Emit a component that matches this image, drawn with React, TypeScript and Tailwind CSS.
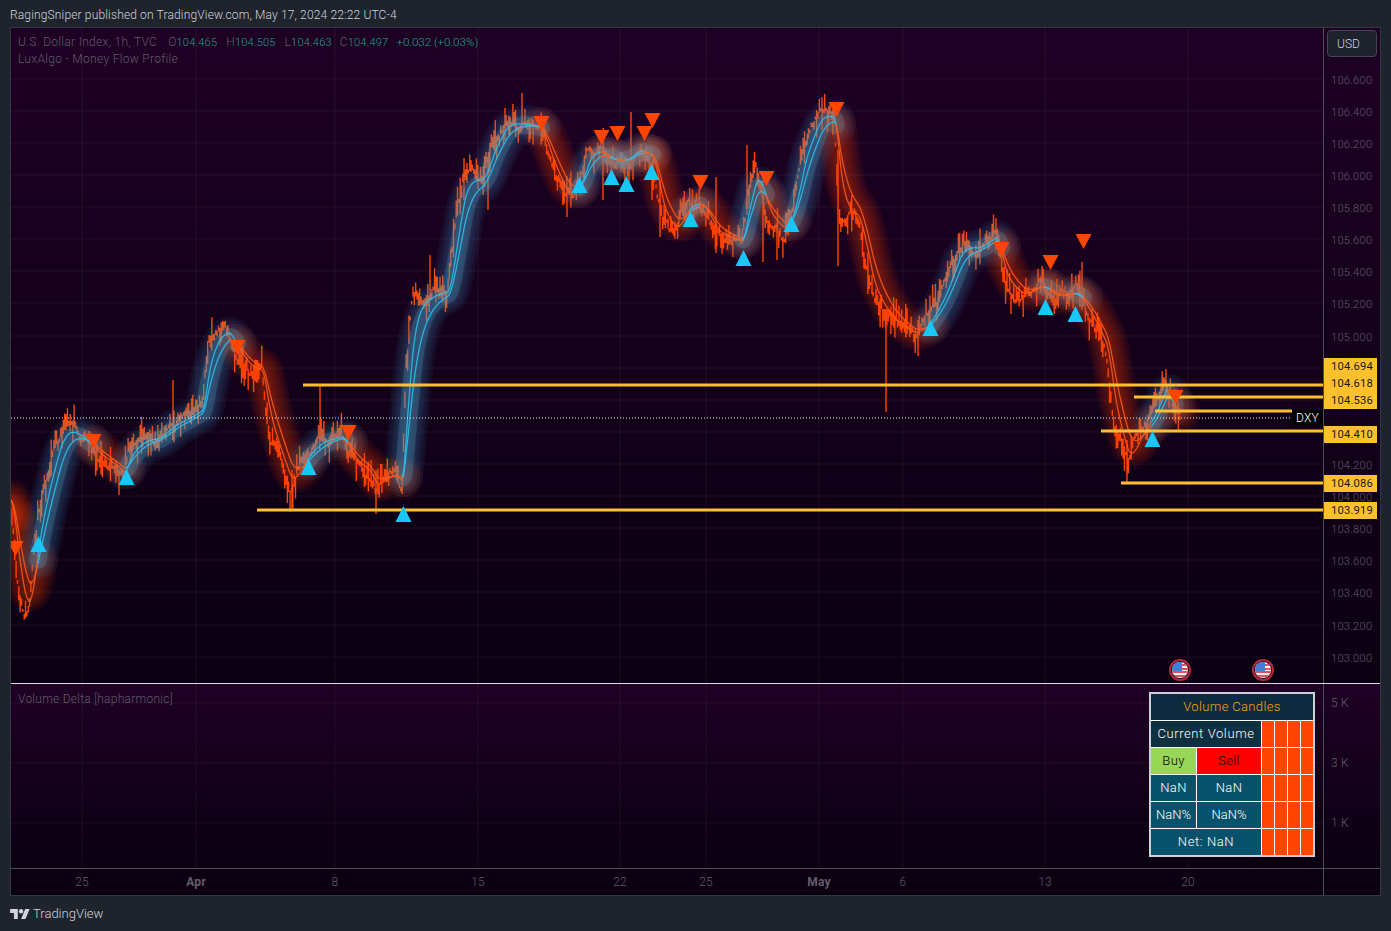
import React from "react";

const PRICE_TICKS = [
  ["106.600", 79], ["106.400", 111], ["106.200", 143], ["106.000", 175], ["105.800", 207],
  ["105.600", 239], ["105.400", 271], ["105.200", 303], ["105.000", 336], ["104.200", 464],
  ["104.000", 496], ["103.800", 528], ["103.600", 560], ["103.400", 592], ["103.200", 625], ["103.000", 657],
] as const;
const GRID_Y = [79, 111, 143, 175, 207, 239, 271, 303, 336, 368, 400, 432, 464, 496, 528, 560, 592, 625, 657];
const TIME_TICKS = [
  ["25", 82], ["Apr", 196], ["8", 335], ["15", 478], ["22", 620], ["25", 706], ["May", 819], ["6", 903], ["13", 1045], ["20", 1188],
] as const;
const PRICE_TAGS = [
  ["104.694", 358], ["104.618", 375], ["104.536", 392], ["104.410", 426], ["104.086", 475], ["103.919", 502],
] as const;
const LEVELS = [
  [303, 385], [1134, 397], [1101, 431], [1121, 483], [257, 510],
];

// hand-read price path, [x, y] in page pixels
const PATH: [number, number][] = [
  [11, 500], [14, 540], [18, 590], [24, 618], [29, 610], [33, 565], [38, 515], [44, 490], [52, 460], [60, 432], [68, 428],
  [80, 437], [92, 450], [104, 460], [118, 470], [124, 476], [130, 448], [142, 440], [158, 438], [172, 424], [186, 418], [202, 408],
  [208, 345], [218, 332], [228, 330], [236, 352], [248, 368], [262, 372], [268, 430], [278, 455], [290, 488], [298, 470], [308, 450],
  [322, 440], [342, 436], [352, 462], [368, 472], [376, 492], [384, 476], [396, 474], [402, 488], [406, 360], [412, 300], [428, 296],
  [448, 290], [456, 220], [464, 175], [482, 180], [494, 140], [506, 122], [522, 124], [540, 128], [552, 170], [566, 198], [578, 188],
  [588, 150], [600, 150], [612, 162], [626, 160], [638, 148], [652, 158], [662, 222], [676, 232], [688, 202], [702, 204], [716, 236],
  [730, 238], [742, 244], [748, 190], [756, 165], [768, 220], [784, 232], [792, 210], [804, 145], [820, 112], [834, 118], [840, 215],
  [858, 218], [872, 296], [892, 322], [914, 335], [928, 322], [944, 290], [960, 245], [978, 248], [996, 234], [1004, 285], [1022, 296],
  [1040, 284], [1056, 298], [1076, 292], [1092, 322], [1106, 352], [1114, 425], [1128, 466], [1140, 430], [1154, 410], [1166, 378], [1174, 420], [1180, 420],
];

// one-off wicks that stick out of the band
const SPIKES: [number, number, number][] = [
  [320, 385, 440], [886, 322, 412], [522, 93, 130], [173, 380, 425], [1082, 262, 310], [838, 150, 266], [292, 470, 510], [376, 470, 514],
  [1127, 440, 482], [1166, 369, 400], [119, 470, 495], [631, 112, 170], [430, 255, 300], [660, 180, 237], [716, 177, 253], [747, 145, 215],
  [763, 180, 262], [777, 225, 260], [603, 150, 200], [567, 195, 217], [822, 97, 130], [996, 218, 250], [918, 320, 356], [464, 158, 200],
  [652, 178, 200], [505, 108, 140], [488, 158, 210],
];

const SELLS: [number, number][] = [
  [15, 549], [93, 442], [237, 348], [348, 433], [541, 124], [601, 138], [617, 134], [644, 134], [652, 121], [700, 183], [766, 179],
  [836, 110], [1001, 250], [1050, 263], [1083, 242], [1175, 398],
];
const BUYS: [number, number][] = [
  [38, 544], [126, 477], [308, 467], [403, 514], [579, 185], [611, 177], [626, 184], [651, 172], [690, 219], [743, 258], [791, 224],
  [930, 328], [1045, 307], [1075, 314], [1152, 439],
];

function baseAt(x: number) {
  for (let i = 0; i < PATH.length - 1; i++) {
    const [x0, y0] = PATH[i];
    const [x1, y1] = PATH[i + 1];
    if (x >= x0 && x <= x1) return y0 + ((y1 - y0) * (x - x0)) / (x1 - x0);
  }
  return PATH[PATH.length - 1][1];
}

function buildChart() {
  let seed = 42;
  const rnd = () => {
    seed = (seed + 0x6d2b79f5) | 0;
    let t = Math.imul(seed ^ (seed >>> 15), 1 | seed);
    t = (t + Math.imul(t ^ (t >>> 7), 61 | t)) ^ t;
    return ((t ^ (t >>> 14)) >>> 0) / 4294967296;
  };
  let bars = "";
  let drift = 0;
  for (let x = 12; x <= 1180; x += 1.35) {
    drift = drift * 0.86 + (rnd() - 0.5) * 5.5;
    const c = baseAt(x) + drift + 3 * Math.sin(x * 0.33);
    const top = c - 1.5 - rnd() ** 3 * 20;
    const bot = c + 1.5 + rnd() ** 3 * 20;
    bars += `M${x.toFixed(1)} ${top.toFixed(1)}V${bot.toFixed(1)}`;
  }
  for (const [x, a, b] of SPIKES) bars += `M${x} ${a}V${b}`;

  // the two moving averages, one point per pixel
  const fast: [number, number][] = [];
  const slow: [number, number][] = [];
  let f = baseAt(11);
  let s = baseAt(11);
  for (let x = 11; x <= 1180; x++) {
    const b = baseAt(x);
    f += (b - f) * 0.16;
    s += (b - s) * 0.09;
    fast.push([x, f]);
    slow.push([x, s]);
  }

  const turns = [
    ...SELLS.map(([x]) => ({ x, kind: "sell" })),
    ...BUYS.map(([x]) => ({ x, kind: "buy" })),
  ].sort((a, b) => a.x - b.x);
  turns.unshift({ x: 11, kind: "sell" });
  const toD = (pts: [number, number][]) => "M" + pts.map(([x, y]) => `${x} ${y.toFixed(1)}`).join("L");
  const segments = turns.map((t, i) => {
    const end = i < turns.length - 1 ? turns[i + 1].x : 1180;
    const inRange = (p: [number, number]) => p[0] >= t.x && p[0] <= end;
    const mid = fast.map((p, j) => [p[0], (p[1] + slow[j][1]) / 2] as [number, number]).filter(inRange);
    return {
      kind: t.kind,
      key: t.x + t.kind,
      mid: toD(mid.length > 1 ? mid : [[t.x, baseAt(t.x)], [t.x + 1, baseAt(t.x)]]),
      fast: toD(fast.filter(inRange)),
      slow: toD(slow.filter(inRange)),
    };
  });
  return { bars, segments };
}

const CHART = buildChart();
const GLOW_WIDTHS = [40, 34, 28, 22, 16, 10];

function Flag({ x, y }: { x: number; y: number }) {
  return (
    <g transform={`translate(${x} ${y})`}>
      <circle r="10" fill="#1c1020" stroke="#b5283c" strokeWidth="2" />
      <g clipPath="url(#flag-clip)">
        <rect x="-8" y="-8" width="16" height="16" fill="#f4f4f4" />
        <rect x="-8" y="1" width="16" height="2" fill="#e4505a" />
        <rect x="-8" y="5" width="16" height="2" fill="#e4505a" />
        <rect x="2" y="-6" width="6" height="2" fill="#e4505a" />
        <rect x="2" y="-2" width="6" height="2" fill="#e4505a" />
        <rect x="-8" y="-8" width="10" height="9" fill="#3f7fd8" />
      </g>
    </g>
  );
}

function PriceChart() {
  return (
    <svg viewBox="11 28 1312 655" className="absolute inset-0 h-full w-full">
      <defs>
        <clipPath id="flag-clip">
          <circle r="8" />
        </clipPath>
      </defs>
      {GRID_Y.map((y) => (
        <line key={y} x1="11" x2="1323" y1={y} y2={y} stroke="#ffffff" strokeOpacity="0.055" />
      ))}
      {TIME_TICKS.map(([, x]) => (
        <line key={x} x1={x} x2={x} y1="28" y2="683" stroke="#ffffff" strokeOpacity="0.055" />
      ))}
      <path d={CHART.bars} stroke="#ff4500" strokeWidth="1.4" fill="none" />
      <g fill="none" strokeLinecap="round" strokeLinejoin="round">
        {CHART.segments.map((s) =>
          GLOW_WIDTHS.map((w) => (
            <path key={s.key + w} d={s.mid} strokeWidth={w} stroke={s.kind === "buy" ? "#3a9fd0" : "#ff4500"} strokeOpacity="0.08" />
          )),
        )}
        {CHART.segments.filter((s) => s.kind === "buy").map((s) => (
          <path key={s.key + "core"} d={s.mid} strokeWidth="18" stroke="#5fa8c8" strokeOpacity="0.22" />
        ))}
        {CHART.segments.map((s) => (
          <g key={s.key} stroke={s.kind === "buy" ? "#2cc2f0" : "#ff5a1c"} strokeWidth="1.3" strokeOpacity="0.85">
            <path d={s.fast} />
            <path d={s.slow} />
          </g>
        ))}
      </g>
      <line x1="11" x2="1292" y1="418" y2="418" stroke="#e8e8e8" strokeDasharray="1 2" />
      {LEVELS.map(([x, y]) => (
        <line key={y} x1={x} x2="1323" y1={y} y2={y} stroke="#ffc02e" strokeWidth="3" />
      ))}
      <line x1="1155" x2="1292" y1="411" y2="411" stroke="#ffc02e" strokeWidth="3" />
      {SELLS.map(([x, y]) => (
        <polygon key={x} points={`${x - 7.5},${y - 8} ${x + 8.5},${y - 8} ${x + 0.5},${y + 7}`} fill="#ff4500" />
      ))}
      {BUYS.map(([x, y]) => (
        <polygon key={x} points={`${x - 7.5},${y + 8} ${x + 8.5},${y + 8} ${x + 0.5},${y - 8}`} fill="#18c6f7" />
      ))}
      <Flag x={1180} y={670} />
      <Flag x={1263} y={670} />
    </svg>
  );
}

function VolumeTable() {
  const side = Array.from({ length: 4 });
  const cell = "flex items-center justify-center";
  return (
    <div className="absolute top-[8px] left-[1138px] border-2 border-[#cdd0d8] bg-white text-[13px] font-light tracking-[0.35px]">
      <div className="grid grid-cols-[45px_64px_12px_12px_12px_12px] grid-rows-[repeat(6,26px)] gap-px">
        <div className={`${cell} col-span-6 bg-[#0d2a3e] text-[#f5a90f]`}>Volume Candles</div>
        <div className={`${cell} col-span-2 bg-[#0e3040] text-white tracking-[0.6px]`}>Current Volume</div>
        {side.map((_, i) => <div key={i} className="bg-[#ff4500]" />)}
        <div className={`${cell} bg-[#98d658] text-black`}>Buy</div>
        <div className={`${cell} bg-[#ff0000] text-black`}>Sell</div>
        {side.map((_, i) => <div key={i} className="bg-[#ff4500]" />)}
        <div className={`${cell} bg-[#07516b] text-white`}>NaN</div>
        <div className={`${cell} bg-[#07516b] text-white`}>NaN</div>
        {side.map((_, i) => <div key={i} className="bg-[#ff4500]" />)}
        <div className={`${cell} bg-[#07516b] text-white tracking-normal`}>NaN%</div>
        <div className={`${cell} bg-[#07516b] text-white tracking-normal`}>NaN%</div>
        {side.map((_, i) => <div key={i} className="bg-[#ff4500]" />)}
        <div className={`${cell} col-span-2 bg-[#07516b] text-white tracking-[0.6px]`}>Net: NaN</div>
        {side.map((_, i) => <div key={i} className="bg-[#ff4500]" />)}
      </div>
    </div>
  );
}

function Ohlc({ label, value, gap }: { label: string; value: string; gap: string }) {
  return (
    <span className={gap}>
      {label}
      <span className="text-[11px] text-[#1fa08e]">{value}</span>
    </span>
  );
}

export default function App() {
  return (
    <div className="flex h-[931px] w-[1391px] flex-col overflow-hidden bg-[#1e232c] font-['Roboto',sans-serif] text-[12px] font-light tracking-[0.2px] text-[#d1d4dc]">
      <div className="flex h-[27px] items-center px-[10px] pt-[2px] tracking-[0.15px]">RagingSniper published on TradingView.com, May 17, 2024 22:22 UTC-4</div>

      <div className="mx-[10px] flex h-[869px] flex-col border border-[#333842]">
        <div className="flex h-[656px] border-b border-[#dcdcdc]">
          <div className="relative flex-1 bg-gradient-to-b from-[#1e0024] to-[#0b0012]">
            <PriceChart />
            <div className="absolute top-[6px] left-[7px] leading-[17px] text-[#625c6c]">
              <div className="flex items-baseline">
                <span className="mr-[11px] tracking-[0.3px]">U.S. Dollar Index, 1h, TVC</span>
                <Ohlc label="O" value="104.465" gap="mr-[9px]" />
                <Ohlc label="H" value="104.505" gap="mr-[9px]" />
                <Ohlc label="L" value="104.463" gap="mr-[8px]" />
                <Ohlc label="C" value="104.497" gap="mr-[8px]" />
                <span className="text-[11.7px] tracking-[-0.1px] text-[#1fa08e]">+0.032 (+0.03%)</span>
              </div>
              <div className="tracking-[0.3px]">LuxAlgo - Money Flow Profile</div>
            </div>
            <div className="absolute top-[382px] right-0 flex h-[15px] w-[31px] items-center justify-center bg-black text-white">DXY</div>
          </div>
          <div className="relative w-[57px] border-l border-[#4a4e58] bg-gradient-to-b from-[#1e0024] to-[#0b0012] text-[11.2px] text-[#625c6c]">
            <div className="absolute top-[2px] left-[3px] flex h-[27px] w-[50px] items-center rounded-[4px] border border-[#434651] bg-[#1e222d] pt-[1px] pl-[9px] text-[12px] tracking-normal text-[#d1d4dc]">USD</div>
            {PRICE_TICKS.map(([label, y]) => (
              <div key={label} className="absolute left-[7px] leading-[16px]" style={{ top: y - 28 - 6 }}>{label}</div>
            ))}
            {PRICE_TAGS.map(([label, y]) => (
              <div key={label} className="absolute left-0 flex h-[17px] w-[53px] items-center bg-[#ffc02e] pt-[2px] pl-[7px] font-normal text-[#131722]" style={{ top: y - 28 }}>{label}</div>
            ))}
          </div>
        </div>

        <div className="flex h-[184px]">
          <div className="relative flex-1 bg-gradient-to-b from-[#1e0024] to-[#0b0012]">
            <svg viewBox="11 684 1312 184" className="absolute inset-0 h-full w-full">
              {[703, 763, 823].map((y) => (
                <line key={y} x1="11" x2="1323" y1={y} y2={y} stroke="#ffffff" strokeOpacity="0.05" />
              ))}
              {TIME_TICKS.map(([, x]) => (
                <line key={x} x1={x} x2={x} y1="684" y2="868" stroke="#ffffff" strokeOpacity="0.05" />
              ))}
            </svg>
            <div className="absolute top-[7px] left-[7px] leading-[17px] tracking-[0.25px] text-[#625c6c]">Volume Delta [hapharmonic]</div>
            <VolumeTable />
          </div>
          <div className="relative w-[57px] border-l border-[#4a4e58] bg-gradient-to-b from-[#1e0024] to-[#0b0012] text-[#625c6c]">
            {[["5 K", 703], ["3 K", 763], ["1 K", 823]].map(([label, y]) => (
              <div key={label} className="absolute left-[7px] leading-[16px]" style={{ top: (y as number) - 684 - 8 }}>{label}</div>
            ))}
          </div>
        </div>

        <div className="flex h-[27px] border-t border-[#4a4e58] bg-[#0b0012] text-[#625c6c]">
          <div className="relative flex-1">
            {TIME_TICKS.map(([label, x]) => (
              <div
                key={x}
                className={`absolute top-[4px] -translate-x-1/2 ${label === "Apr" || label === "May" ? "font-bold" : ""}`}
                style={{ left: x - 11 }}
              >
                {label}
              </div>
            ))}
          </div>
          <div className="w-[57px] border-l border-[#4a4e58]" />
        </div>
      </div>

      <div className="flex h-[35px] items-center gap-[3px] px-[10px] text-[13px] tracking-normal">
        <svg viewBox="0 0 36 20" className="h-[11px] w-[20px] fill-[#d1d4dc]">
          <path d="M14 20H7V9H0V2h14v18zM28 20h-8l7.5-18h8L28 20z" />
          <circle cx="20" cy="6" r="4" />
        </svg>
        <span>TradingView</span>
      </div>
    </div>
  );
}
